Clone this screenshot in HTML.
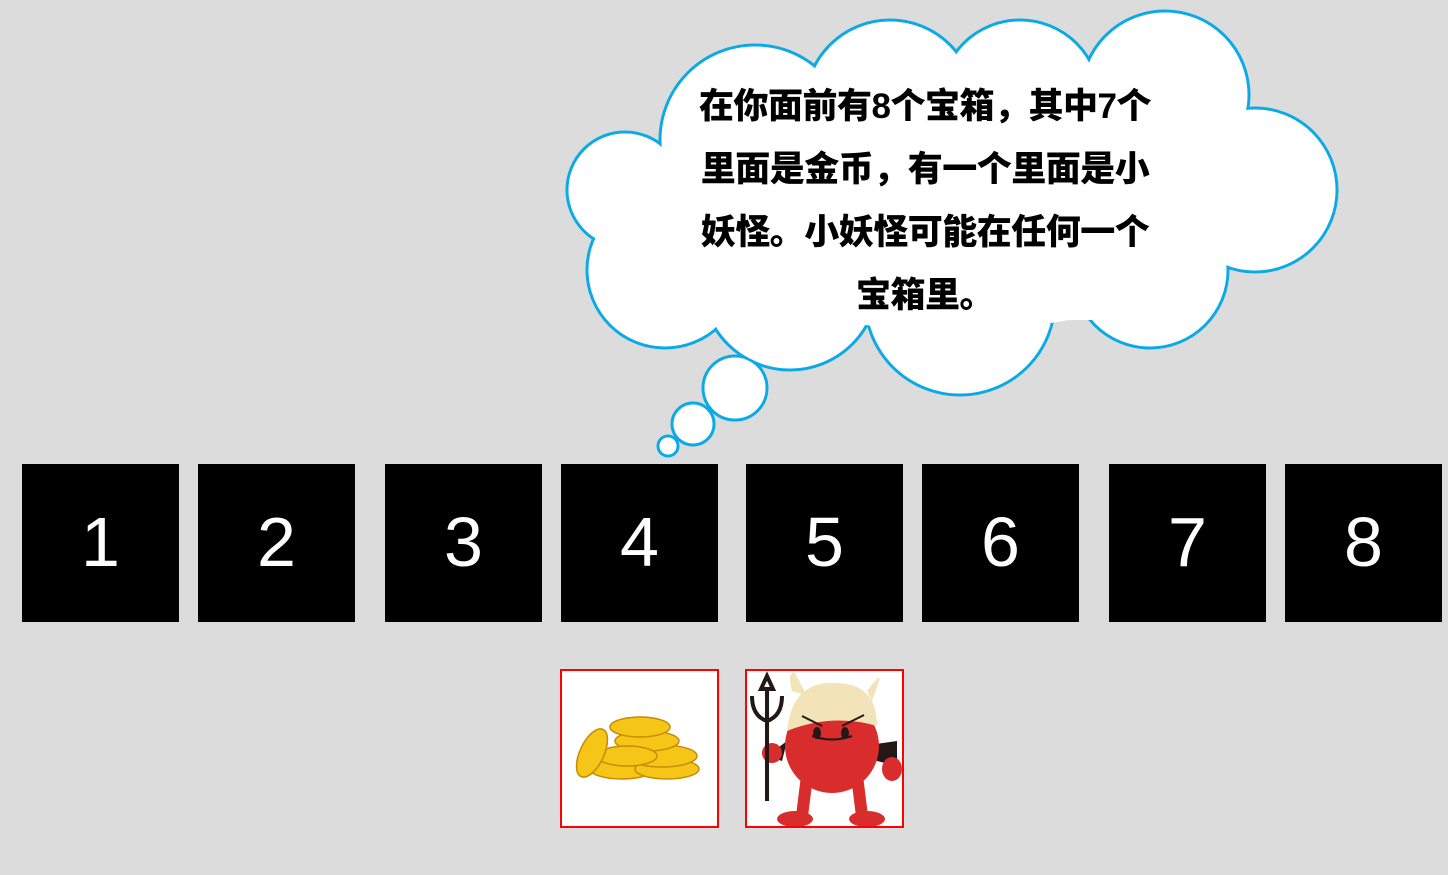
<!DOCTYPE html>
<html><head><meta charset="utf-8"><style>
body{margin:0;width:1448px;height:875px;background:#dcdcdc;position:relative;overflow:hidden;font-family:"Liberation Sans",sans-serif}
.b{position:absolute;top:464px;width:157px;height:158px;background:#000;color:#fff;font-size:70px;line-height:156px;text-align:center}
.txt{position:absolute;left:655px;width:540px;top:75px;text-align:center;font:900 35px/63px "Liberation Sans","Noto Sans CJK SC",sans-serif;color:#000;letter-spacing:-0.5px}
.img{position:absolute;top:669px;width:155px;height:155px;border:2px solid #f00;background:#fff;overflow:hidden}
</style></head><body>
<svg width="1448" height="875" style="position:absolute;left:0;top:0">
<g fill="none" stroke="#0aaae6" stroke-width="3">
<circle cx="625" cy="190" r="58"/><circle cx="665" cy="270" r="78"/><circle cx="755" cy="140" r="95"/><circle cx="890" cy="105" r="85"/><circle cx="1020" cy="100" r="80"/><circle cx="1165" cy="95" r="84"/><circle cx="1255" cy="190" r="82"/><circle cx="1150" cy="270" r="78"/><circle cx="960" cy="300" r="95"/><circle cx="790" cy="282" r="88"/>
<circle cx="735" cy="388" r="32"/><circle cx="693" cy="424" r="21"/><circle cx="668" cy="446" r="10"/>
</g>
<g fill="#fff">
<circle cx="625" cy="190" r="56.5"/><circle cx="665" cy="270" r="76.5"/><circle cx="755" cy="140" r="93.5"/><circle cx="890" cy="105" r="83.5"/><circle cx="1020" cy="100" r="78.5"/><circle cx="1165" cy="95" r="82.5"/><circle cx="1255" cy="190" r="80.5"/><circle cx="1150" cy="270" r="76.5"/><circle cx="960" cy="300" r="93.5"/><circle cx="790" cy="282" r="86.5"/>
<ellipse cx="950" cy="200" rx="310" ry="130"/>
<rect x="700" y="100" width="500" height="220"/>
<circle cx="735" cy="388" r="30.5"/><circle cx="693" cy="424" r="19.5"/><circle cx="668" cy="446" r="8.5"/>
</g>
</svg>
<div class="txt">在你面前有8个宝箱，其中7个<br>里面是金币，有一个里面是小<br>妖怪。小妖怪可能在任何一个<br>宝箱里。</div>
<div class="b" style="left:22px">1</div><div class="b" style="left:198px">2</div><div class="b" style="left:385px">3</div><div class="b" style="left:561px">4</div><div class="b" style="left:746px">5</div><div class="b" style="left:922px">6</div><div class="b" style="left:1109px">7</div><div class="b" style="left:1285px">8</div>
<div class="img" style="left:560px"><svg width="155" height="155">
<g stroke="#c88a00" stroke-width="1.5" fill="#f5c518">
<ellipse cx="60" cy="98" rx="32" ry="10"/><ellipse cx="105" cy="98" rx="32" ry="10"/><ellipse cx="100" cy="85" rx="35" ry="11"/><ellipse cx="85" cy="70" rx="32" ry="10"/><ellipse cx="78" cy="56" rx="30" ry="10"/><ellipse cx="65" cy="85" rx="30" ry="10"/>
<ellipse cx="30" cy="82" rx="12" ry="26" transform="rotate(25 30 82)"/></g></svg></div>
<div class="img" style="left:745px"><svg width="155" height="155">
<path d="M45 20 Q40 0 48 2 L60 25Z M120 20 Q135 0 132 10 L125 30Z" fill="#f2e3b8"/>
<path d="M115 75 L150 70 L150 95 L130 90Z M40 70 L20 85 L35 90Z" fill="#231815"/>
<circle cx="85" cy="75" r="47" fill="#d92c2c"/>
<path d="M40 60 Q45 10 88 12 Q130 12 130 55 Q85 42 40 60Z" fill="#f2e3b8"/>
<path d="M60 105 L55 145 M110 105 L115 145" stroke="#d92c2c" stroke-width="12"/>
<ellipse cx="48" cy="148" rx="18" ry="8" fill="#d92c2c"/><ellipse cx="120" cy="148" rx="18" ry="8" fill="#d92c2c"/>
<ellipse cx="145" cy="98" rx="10" ry="12" fill="#d92c2c"/><ellipse cx="25" cy="82" rx="10" ry="10" fill="#d92c2c"/>
<path d="M20 18 V130 M5 25 Q5 45 20 50 Q35 45 35 25 M20 5 L14 18 H26Z" stroke="#231815" stroke-width="4" fill="none"/>
<path d="M55 45 L75 55 M95 55 L117 44 M65 65 Q85 72 105 65" stroke="#231815" stroke-width="2" fill="none"/>
<ellipse cx="70" cy="62" rx="4" ry="6" fill="#231815"/><ellipse cx="98" cy="62" rx="4" ry="6" fill="#231815"/>
</svg></div>
</body></html>
